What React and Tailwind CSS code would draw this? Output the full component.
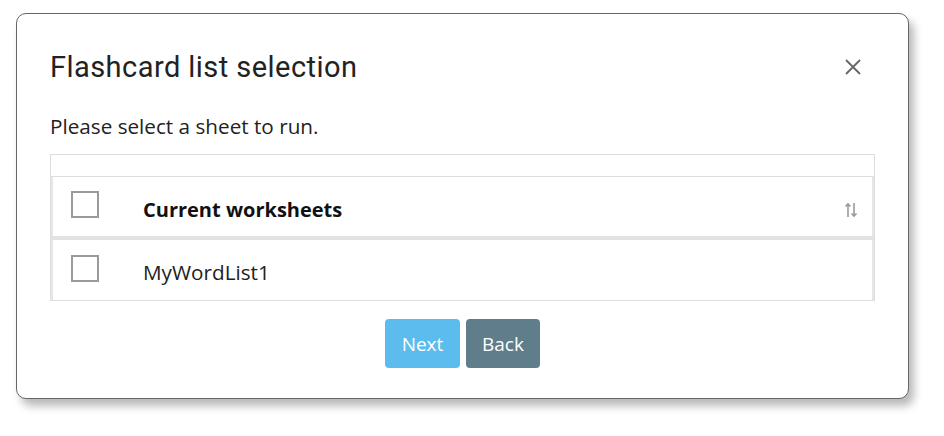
import { useState } from 'react';

const BODY_FONT = "font-['Segoe_UI','Open_Sans','Noto_Sans',sans-serif]";

const Checkbox = ({ checked, onChange, className = '' }) => (
  <button
    type="button"
    onClick={onChange}
    className={`w-[28px] h-[27px] shrink-0 border-2 border-[#9a9a9a] bg-white flex items-center justify-center ${className}`}
  >
    {checked && <span className="w-[14px] h-[14px] bg-[#5bbcec]" />}
  </button>
);

const SortIcon = () => (
  <svg width="14" height="16" viewBox="0 0 14 16" fill="none" stroke="#9a9a9a" strokeWidth="1.6">
    <path d="M4 15V2M1.5 4.5L4 2l2.5 2.5" />
    <path d="M10 1v13M7.5 11.5L10 14l2.5-2.5" />
  </svg>
);

export default function App() {
  const [all, setAll] = useState(false);
  const [rows, setRows] = useState({ MyWordList1: false });

  return (
    <div className="w-[944px] h-[436px] bg-white pt-[13px] pl-[16px]">
      <div className="w-[893px] h-[386px] border border-[#666] rounded-[10px] bg-white shadow-[5px_7px_9px_rgba(0,0,0,0.28)] px-[33px] pt-[35px]">
        {/* Header */}
        <div className="flex items-center justify-between h-[36px]">
          <h1 className="font-['Roboto',sans-serif] text-[29px] leading-[36px] text-[#222] tracking-[0.45px]">
            Flashcard list selection
          </h1>
          <button type="button" className="mr-[13px] w-[18px] h-[18px] flex items-center justify-center">
            <svg width="16" height="16" viewBox="0 0 16 16" stroke="#666" strokeWidth="1.8">
              <path d="M1 1l14 14M15 1L1 15" />
            </svg>
          </button>
        </div>

        <p className={`${BODY_FONT} mt-[28px] text-[20.7px] leading-[26px] text-[#222]`}>
          Please select a sheet to run.
        </p>

        {/* Table */}
        <div className={`${BODY_FONT} mt-[15px] border border-[#dedede]`}>
          <div className="h-[22px] border-b border-[#dedede]" />
          <div className="h-[59px] flex items-start pl-[18px] pr-[14px] border-l-2 border-r-2 border-[#e6e6e6]">
            <Checkbox className="mt-[14px]" checked={all} onChange={() => setAll((a) => !a)} />
            <span className="ml-[44px] mt-[19px] text-[20px] leading-[28px] font-bold text-[#111]">
              Current worksheets
            </span>
            <span className="ml-auto mt-[25px]">
              <SortIcon />
            </span>
          </div>
          <div className="h-[4px] bg-[#e2e2e2]" />
          <div className="h-[60px] flex items-start pl-[18px] border-l-2 border-r-2 border-[#e6e6e6]">
            <Checkbox
              className="mt-[15px]"
              checked={rows.MyWordList1}
              onChange={() => setRows((r) => ({ ...r, MyWordList1: !r.MyWordList1 }))}
            />
            <span className="ml-[44px] mt-[18px] text-[20.7px] leading-[28px] text-[#222]">MyWordList1</span>
          </div>
        </div>

        {/* Actions */}
        <div className={`${BODY_FONT} mt-[18px] flex justify-center gap-[6px]`}>
          <button type="button" className="w-[75px] h-[49px] rounded-[4px] bg-[#5dbcee] text-white text-[19px] pt-[2px]">
            Next
          </button>
          <button type="button" className="w-[74px] h-[49px] rounded-[4px] bg-[#607d8b] text-white text-[19px] pt-[2px]">
            Back
          </button>
        </div>
      </div>
    </div>
  );
}
